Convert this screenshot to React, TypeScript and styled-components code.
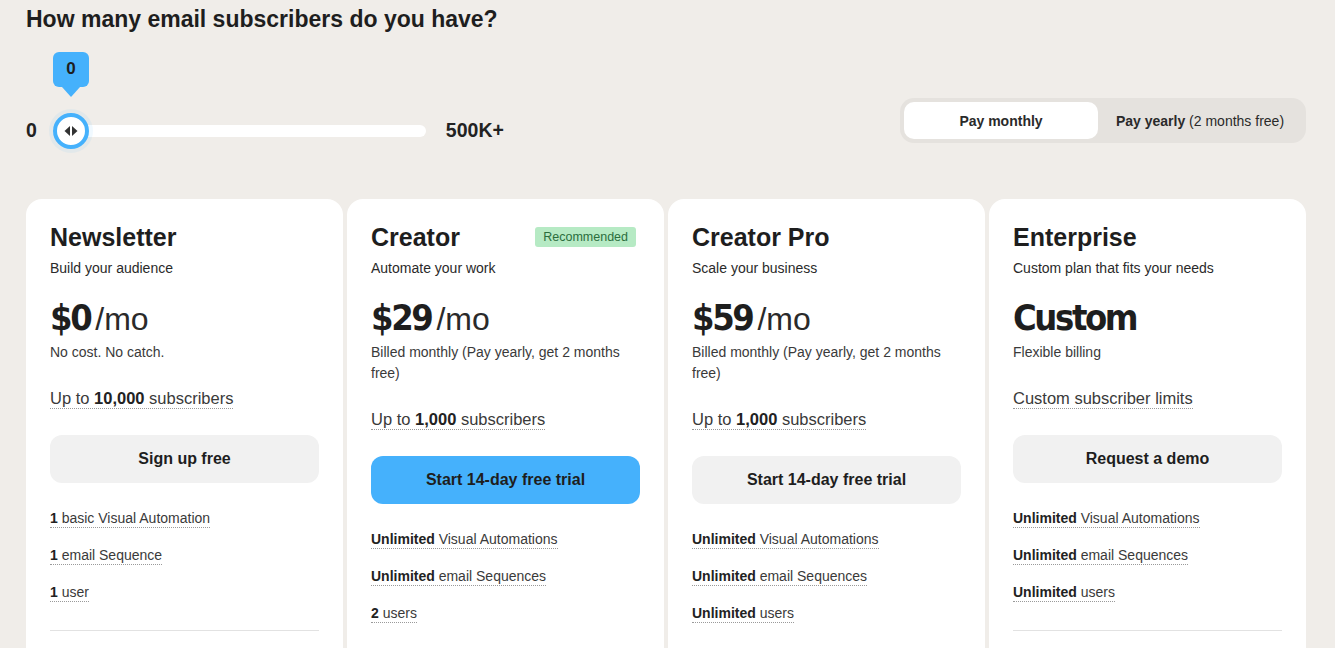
import React, { useState } from 'react';
import styled, { createGlobalStyle } from 'styled-components';

const GlobalStyle = createGlobalStyle`
  * { box-sizing: border-box; }
  body {
    margin: 0;
    background: #f0ede9;
    font-family: "Liberation Sans", Arial, sans-serif;
    color: #222;
  }
`;

const Page = styled.main`
  width: 1335px;
  padding: 5px 29px 0 26px;
`;

const Heading = styled.h1`
  margin: 0;
  font-size: 23px;
  line-height: 28px;
  font-weight: 700;
  color: #1e1e1e;
`;

const TopRow = styled.div`
  display: flex;
  justify-content: space-between;
  align-items: flex-start;
`;

const SliderBlock = styled.div`
  display: flex;
  align-items: center;
  gap: 16px;
  padding-top: 86px;
`;

const RangeLabel = styled.span`
  font-size: 19.5px;
  font-weight: 700;
  color: #222;
`;

const MaxLabel = styled(RangeLabel)`
  margin-left: 4px;
`;

const Track = styled.div`
  position: relative;
  width: 373px;
  height: 12px;
  border-radius: 6px;
  background: #fff;
`;

const Thumb = styled.div`
  position: absolute;
  left: 0;
  top: 50%;
  transform: translateY(-50%);
  width: 36px;
  height: 36px;
  border-radius: 50%;
  background: #fff;
  border: 4px solid #45b1fc;
  box-shadow: 0 0 0 4px rgba(69, 177, 252, 0.08);
  display: flex;
  align-items: center;
  justify-content: center;
`;

const Bubble = styled.div`
  position: absolute;
  left: 0;
  bottom: calc(100% + 38px);
  width: 36px;
  height: 35px;
  border-radius: 6px;
  background: #45b1fc;
  display: flex;
  align-items: center;
  justify-content: center;
  font-size: 17px;
  font-weight: 700;
  color: #1e1e1e;

  &::after {
    content: '';
    position: absolute;
    left: 50%;
    top: 100%;
    transform: translateX(-50%);
    border-left: 9px solid transparent;
    border-right: 9px solid transparent;
    border-top: 10px solid #45b1fc;
  }
`;

const Toggle = styled.div`
  margin-top: 65px;
  width: 406px;
  height: 45px;
  padding: 4px;
  border-radius: 14px;
  background: #e5e2de;
  display: flex;
`;

const ToggleOption = styled.button<{ $active?: boolean }>`
  flex: ${({ $active }) => ($active ? '0 0 194px' : '1')};
  border: none;
  border-radius: 10px;
  background: ${({ $active }) => ($active ? '#fff' : 'transparent')};
  font-family: inherit;
  font-size: 14px;
  color: #2a2a2a;
  cursor: pointer;

  b { font-weight: 700; }
`;

const Cards = styled.section`
  display: grid;
  grid-template-columns: repeat(4, 317px);
  gap: 4px;
  margin-top: 56px;
`;

const Card = styled.article`
  background: #fff;
  border-radius: 16px;
  padding: 24px 24px 40px;
`;

const TitleRow = styled.div`
  display: flex;
  justify-content: space-between;
  align-items: center;
`;

const Title = styled.h2`
  margin: 0;
  font-size: 25px;
  line-height: 28px;
  font-weight: 700;
  color: #1e1e1e;
`;

const Badge = styled.span`
  background: #b6eac4;
  color: #2b6e3d;
  font-size: 12.5px;
  line-height: 20px;
  padding: 0 8px;
  border-radius: 3px;
  margin: -1px 4px 0 0;
`;

const Subtitle = styled.p`
  margin: 7px 0 0;
  font-size: 14px;
  line-height: 20px;
  color: #2a2a2a;
`;

const PriceRow = styled.div`
  margin-top: 16px;
  height: 48px;
  display: flex;
  align-items: baseline;
  gap: 5px;
`;

const Amount = styled.span`
  font-family: "DejaVu Sans", "Liberation Sans", sans-serif;
  font-stretch: condensed;
  font-size: 36px;
  line-height: 48px;
  font-weight: 700;
  letter-spacing: -2.4px;
  color: #1e1e1e;
`;

const Per = styled.span`
  font-size: 32px;
  font-weight: 400;
  color: #2a2a2a;
`;

const Billing = styled.p`
  margin: 0;
  font-size: 14px;
  line-height: 21px;
  color: #3a3a3a;
`;

const Dotted = styled.span`
  border-bottom: 1px dotted #9a9a9a;
  padding-bottom: 1px;
`;

const Limit = styled.p`
  margin: 23px 0 0;
  font-size: 16.5px;
  line-height: 24px;
  color: #3a3a3a;

  b { color: #222; }
`;

const Cta = styled.button<{ $primary?: boolean }>`
  display: block;
  width: 100%;
  height: 48px;
  margin-top: 25px;
  border: none;
  border-radius: 12px;
  background: ${({ $primary }) => ($primary ? '#45b1fc' : '#f1f1f1')};
  font-family: inherit;
  font-size: 16px;
  font-weight: 700;
  color: #1e1e1e;
  cursor: pointer;
`;

const Features = styled.ul`
  list-style: none;
  margin: 25px 0 0;
  padding: 0 0 28px;
  display: flex;
  flex-direction: column;
  gap: 17px;
  border-bottom: 1px solid #e2e2e2;
`;

const Feature = styled.li`
  font-size: 14px;
  line-height: 20px;
  color: #3a3a3a;

  b { color: #222; }
`;

const Arrows = () => (
  <svg width="18" height="14" viewBox="0 0 18 14">
    <path d="M8 2 L2.5 7 L8 12 Z" fill="#333" />
    <path d="M10 2 L15.5 7 L10 12 Z" fill="#333" />
  </svg>
);

type Plan = {
  name: string;
  tagline: string;
  price: string;
  per?: boolean;
  billing: string;
  limit: React.ReactNode;
  cta: string;
  primary?: boolean;
  badge?: string;
  features: [string, string][];
};

const PLANS: Plan[] = [
  {
    name: 'Newsletter',
    tagline: 'Build your audience',
    price: '$0',
    per: true,
    billing: 'No cost. No catch.',
    limit: <>Up to <b>10,000</b> subscribers</>,
    cta: 'Sign up free',
    features: [['1', ' basic Visual Automation'], ['1', ' email Sequence'], ['1', ' user']],
  },
  {
    name: 'Creator',
    tagline: 'Automate your work',
    price: '$29',
    per: true,
    billing: 'Billed monthly (Pay yearly, get 2 months free)',
    limit: <>Up to <b>1,000</b> subscribers</>,
    cta: 'Start 14-day free trial',
    primary: true,
    badge: 'Recommended',
    features: [['Unlimited', ' Visual Automations'], ['Unlimited', ' email Sequences'], ['2', ' users']],
  },
  {
    name: 'Creator Pro',
    tagline: 'Scale your business',
    price: '$59',
    per: true,
    billing: 'Billed monthly (Pay yearly, get 2 months free)',
    limit: <>Up to <b>1,000</b> subscribers</>,
    cta: 'Start 14-day free trial',
    features: [['Unlimited', ' Visual Automations'], ['Unlimited', ' email Sequences'], ['Unlimited', ' users']],
  },
  {
    name: 'Enterprise',
    tagline: 'Custom plan that fits your needs',
    price: 'Custom',
    billing: 'Flexible billing',
    limit: <>Custom subscriber limits</>,
    cta: 'Request a demo',
    features: [['Unlimited', ' Visual Automations'], ['Unlimited', ' email Sequences'], ['Unlimited', ' users']],
  },
];

const App = () => {
  const [yearly, setYearly] = useState(false);
  const subscribers = 0;

  return (
    <>
      <GlobalStyle />
      <Page>
        <Heading>How many email subscribers do you have?</Heading>
        <TopRow>
          <SliderBlock>
            <RangeLabel>0</RangeLabel>
            <Track>
              <Bubble>{subscribers}</Bubble>
              <Thumb>
                <Arrows />
              </Thumb>
            </Track>
            <MaxLabel>500K+</MaxLabel>
          </SliderBlock>
          <Toggle>
            <ToggleOption $active={!yearly} onClick={() => setYearly(false)}>
              <b>Pay monthly</b>
            </ToggleOption>
            <ToggleOption $active={yearly} onClick={() => setYearly(true)}>
              <b>Pay yearly</b> (2 months free)
            </ToggleOption>
          </Toggle>
        </TopRow>

        <Cards>
          {PLANS.map((plan) => (
            <Card key={plan.name}>
              <TitleRow>
                <Title>{plan.name}</Title>
                {plan.badge && <Badge>{plan.badge}</Badge>}
              </TitleRow>
              <Subtitle>{plan.tagline}</Subtitle>
              <PriceRow>
                <Amount>{plan.price}</Amount>
                {plan.per && <Per>/mo</Per>}
              </PriceRow>
              <Billing>{plan.billing}</Billing>
              <Limit>
                <Dotted>{plan.limit}</Dotted>
              </Limit>
              <Cta $primary={plan.primary}>{plan.cta}</Cta>
              <Features>
                {plan.features.map(([strong, rest]) => (
                  <Feature key={strong + rest}>
                    <Dotted>
                      <b>{strong}</b>
                      {rest}
                    </Dotted>
                  </Feature>
                ))}
              </Features>
            </Card>
          ))}
        </Cards>
      </Page>
    </>
  );
};

export default App;
